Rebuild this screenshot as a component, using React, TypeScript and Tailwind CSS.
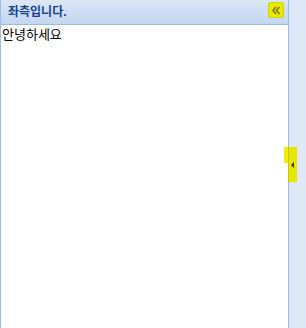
export default function App() {
    return (
        <div className="relative flex w-[306px] h-[328px] bg-[#dfe8f6] overflow-hidden" style={{ fontFamily: '"Liberation Sans", "Noto Sans CJK KR", sans-serif' }}>
            {/* left panel */}
            <div className="flex flex-col w-[289px] h-full border-l border-r border-[#99bbe8] bg-white">
                <div className="flex items-center justify-between h-[25px] border-b border-[#99bbe8] bg-gradient-to-b from-[#dae7f6] to-[#c3d6f0] pl-[7px] pr-[4px]">
                    <span className="text-[12px] font-bold text-[#15428b] leading-none">좌측입니다.</span>
                    <button className="flex items-center justify-center w-[16px] h-[16px] mb-[4px] bg-[#e8e800] border border-[#d4d400] rounded-[2px]">
                        <svg width="10" height="9" viewBox="0 0 10 9">
                            <path d="M5 1 L2 4.5 L5 8 M8.5 1 L5.5 4.5 L8.5 8" stroke="#7a7a20" strokeWidth="1.6" fill="none" />
                        </svg>
                    </button>
                </div>
                <div className="pl-[1px] pt-[2px] text-[13px] text-black leading-[16px]">안녕하세요</div>
            </div>
            {/* splitter handle */}
            <div className="absolute left-[284px] top-[147px] w-[4px] h-[16px] bg-[#f0f000]" />
            <div className="absolute left-[288px] top-[147px] w-[9px] h-[35px] bg-[#e6e600] border-l border-[#c8c800] flex items-center justify-center">
                <svg width="4" height="6" viewBox="0 0 4 6">
                    <path d="M3 0 L0 3 L3 6 Z" fill="#333" />
                </svg>
            </div>
        </div>
    );
}
